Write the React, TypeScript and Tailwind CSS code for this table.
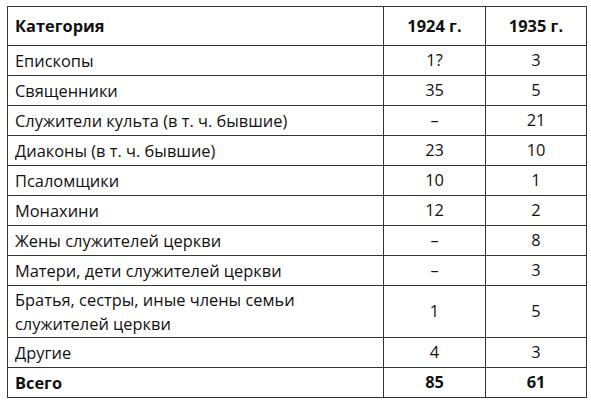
import React from 'react';

type Row = { label: React.ReactNode; a: string; b: string; tall?: boolean; bold?: boolean };

const rows: Row[] = [
  { label: 'Епископы', a: '1?', b: '3' },
  { label: 'Священники', a: '35', b: '5' },
  { label: 'Служители культа (в т. ч. бывшие)', a: '–', b: '21' },
  { label: 'Диаконы (в т. ч. бывшие)', a: '23', b: '10' },
  { label: 'Псаломщики', a: '10', b: '1' },
  { label: 'Монахини', a: '12', b: '2' },
  { label: 'Жены служителей церкви', a: '–', b: '8' },
  { label: 'Матери, дети служителей церкви', a: '–', b: '3' },
  {
    label: (
      <>
        Братья, сестры, иные члены семьи
        <br />
        служителей церкви
      </>
    ),
    a: '1',
    b: '5',
    tall: true,
  },
  { label: 'Другие', a: '4', b: '3' },
  { label: 'Всего', a: '85', b: '61', bold: true },
];

export default function App() {
  return (
    <div className="h-[407px] w-[591px] bg-white pl-[7px] pt-[6px] text-[16.4px] text-[#111] [font-family:'Open_Sans',sans-serif]">
      <table className="w-[579px] table-fixed border-collapse border border-[#333]">
        <colgroup>
          <col className="w-[376px]" />
          <col className="w-[102px]" />
          <col className="w-[101px]" />
        </colgroup>
        <thead>
          <tr className="h-[39px]">
            <th className="border border-[#333] px-[7px] text-left font-bold">Категория</th>
            <th className="border border-[#333] text-center font-bold">1924 г.</th>
            <th className="border border-[#333] text-center font-bold">1935 г.</th>
          </tr>
        </thead>
        <tbody>
          {rows.map((r, i) => (
            <tr key={i} className={r.tall ? 'h-[52px]' : 'h-[30px]'}>
              <td className={`border border-[#333] px-[7px] leading-[24px] ${r.bold ? 'font-bold' : ''}`}>{r.label}</td>
              <td className={`border border-[#333] text-center ${r.bold ? 'font-bold' : ''}`}>{r.a}</td>
              <td className={`border border-[#333] text-center ${r.bold ? 'font-bold' : ''}`}>{r.b}</td>
            </tr>
          ))}
        </tbody>
      </table>
    </div>
  );
}
